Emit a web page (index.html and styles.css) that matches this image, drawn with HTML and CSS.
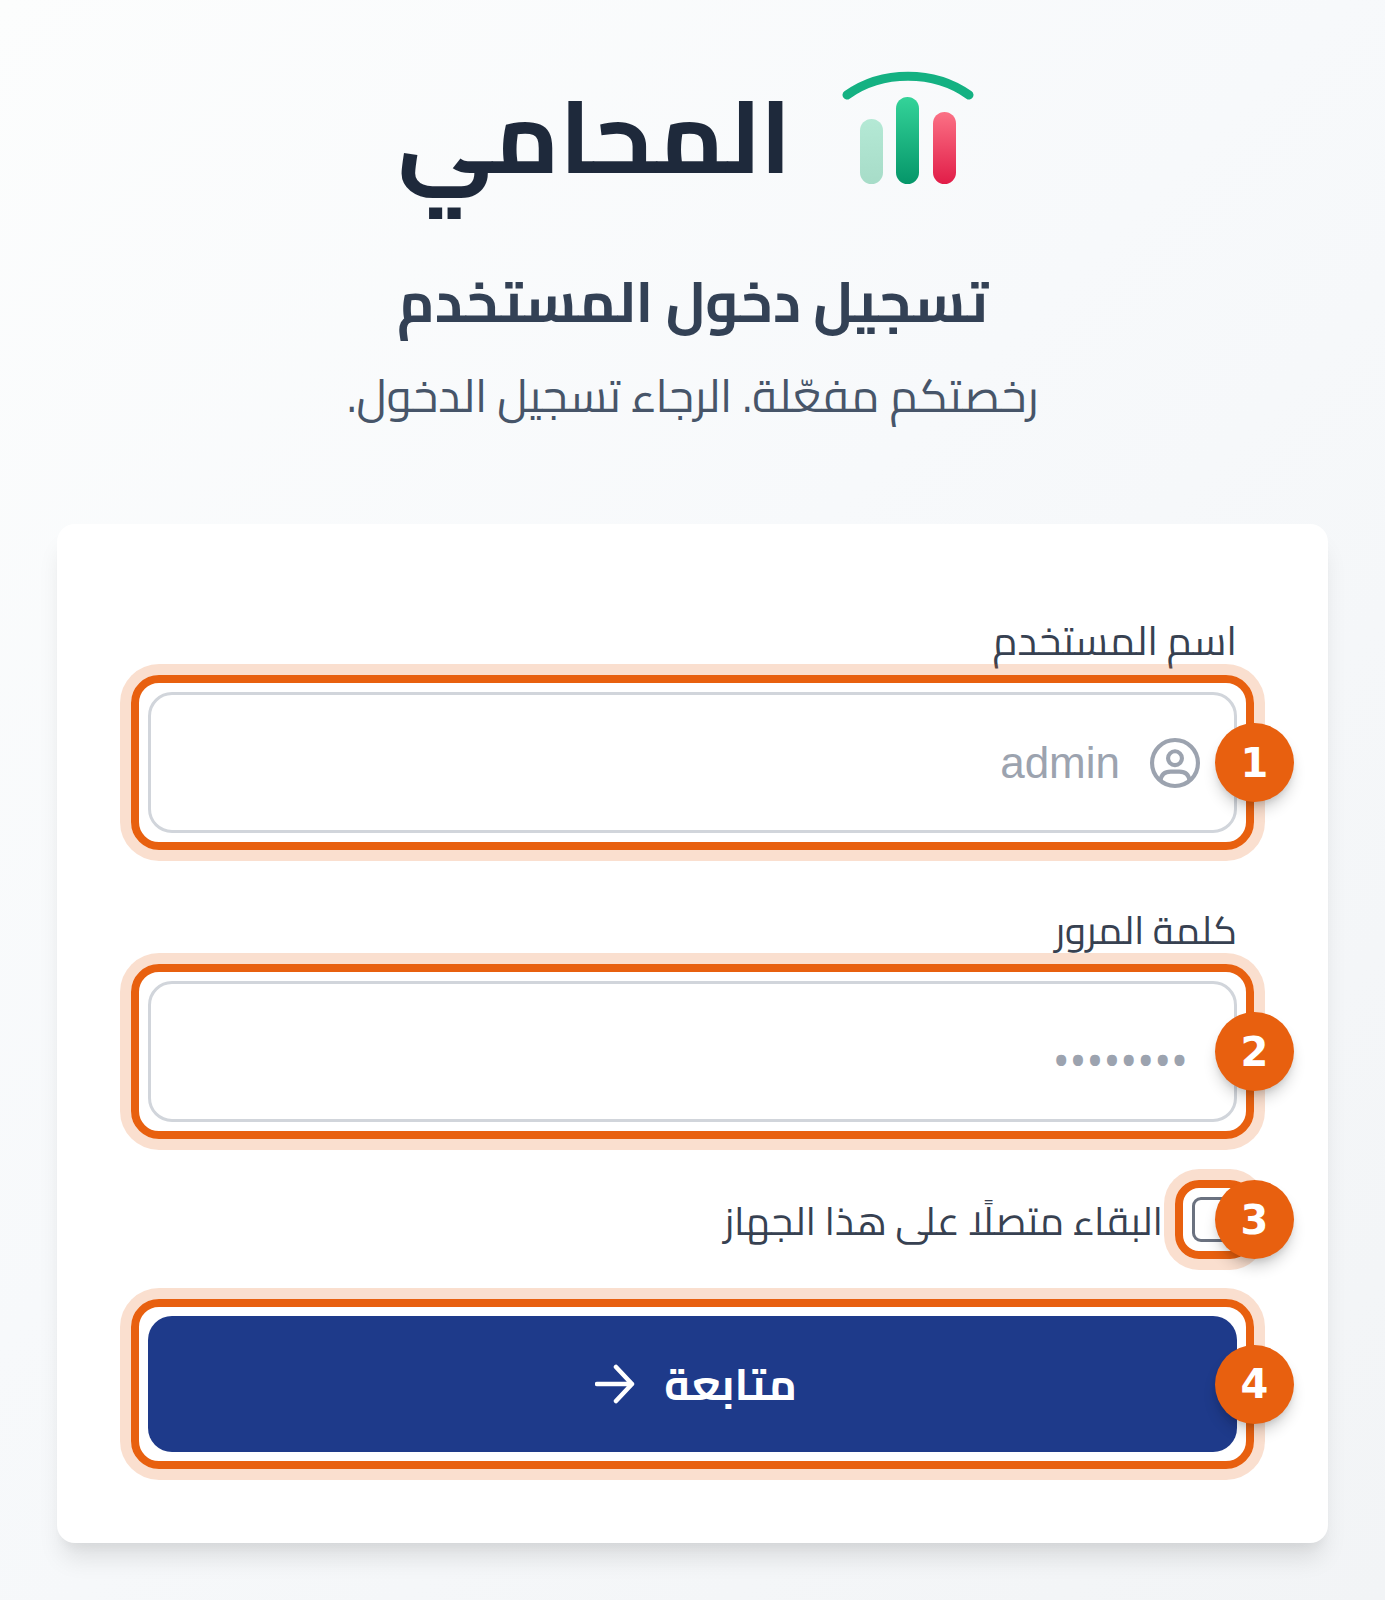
FILE: index.html
```html
<!DOCTYPE html>
<html lang="ar" dir="rtl">
<head>
<meta charset="utf-8">
<title>تسجيل الدخول</title>
<link rel="stylesheet" href="styles.css">
</head>
<body>
<main class="page">
  <header class="head">
    <div class="brand">
      <svg class="logo" viewBox="0 0 134 118" aria-hidden="true">
        <defs>
          <linearGradient id="ga" x1="0" y1="0" x2="0" y2="1"><stop offset="0" stop-color="#34d399"/><stop offset="1" stop-color="#059669"/></linearGradient>
          <linearGradient id="gb" x1="0" y1="0" x2="0" y2="1"><stop offset="0" stop-color="#fb7185"/><stop offset="1" stop-color="#e11d48"/></linearGradient>
          <linearGradient id="gc" x1="0" y1="0" x2="0" y2="1"><stop offset="0" stop-color="#b4e9d5"/><stop offset="1" stop-color="#a7dcc8"/></linearGradient>
        </defs>
        <path class="arc" d="M6 24 C41 -1 93 -1 128 24"/>
        <rect x="19" y="48" width="23" height="65" rx="11.5" fill="url(#gc)"/>
        <rect x="55" y="26" width="23" height="87" rx="11.5" fill="url(#ga)"/>
        <rect x="92" y="41" width="23" height="72" rx="11.5" fill="url(#gb)"/>
      </svg>
      <span class="brand-name">المحامي</span>
    </div>
    <h1 class="title">تسجيل دخول المستخدم</h1>
    <p class="sub">رخصتكم مفعّلة. الرجاء تسجيل الدخول.</p>
  </header>

  <form class="card">
    <label class="label" for="u">اسم المستخدم</label>
    <div class="mark">
      <div class="field">
        <svg class="user" viewBox="0 0 24 24" aria-hidden="true">
          <circle cx="12" cy="12" r="10.6"/>
          <circle cx="12" cy="9.8" r="3.2"/>
          <path d="M5.3 20.2 C5.6 17.4 7.4 16 10 16 H14 C16.6 16 18.4 17.4 18.7 20.2"/>
        </svg>
        <input class="input" id="u" type="text" placeholder="admin">
      </div>
      <span class="badge">1</span>
    </div>

    <label class="label label-next" for="p">كلمة المرور</label>
    <div class="mark">
      <div class="field">
        <input class="input" id="p" type="password" placeholder="••••••••">
      </div>
      <span class="badge">2</span>
    </div>

    <div class="remember">
      <div class="mark mark-check">
        <input class="check" id="r" type="checkbox">
        <span class="badge">3</span>
      </div>
      <label class="remember-text" for="r">البقاء متصلًا على هذا الجهاز</label>
    </div>

    <div class="mark">
      <button class="btn" type="button">
        <span>متابعة</span>
        <svg class="arrow" viewBox="0 0 40 40" aria-hidden="true"><path d="M2 20 H37 M21 3 L37 20 L21 37"/></svg>
      </button>
      <span class="badge">4</span>
    </div>
  </form>
</main>
</body>
</html>
```
FILE: styles.css
```css
* { box-sizing: border-box; }
html, body { margin: 0; }
body {
  min-height: 1600px;
  background: linear-gradient(135deg, #fcfdfd 0%, #f7f9fb 45%, #f2f4f6 100%);
  font-family: Cairo, "DejaVu Sans", sans-serif;
  color: #374151;
}
.page { padding: 0 57px; }
.head { height: 524px; padding-top: 71px; display: flex; flex-direction: column; align-items: center; }
.brand { display: flex; align-items: flex-start; gap: 49px; height: 150px; margin-right: 13px; }
.logo { width: 134px; height: 118px; }
.arc { fill: none; stroke: #14b182; stroke-width: 9; stroke-linecap: round; }
.brand-name { font-size: 101.5px; font-weight: 700; color: #1e293b; line-height: 130px; }
.title { margin: 45px 0 0; font-size: 56.6px; font-weight: 700; color: #334155; line-height: 70px; }
.sub { margin: 33px 0 0; font-size: 45.4px; color: #475569; line-height: 54px; }

.card {
  height: 1019px;
  padding: 94px 91px 91px;
  background: #fff;
  border-radius: 18px;
  box-shadow: 0 20px 25px -5px rgba(0,0,0,.1), 0 10px 10px -5px rgba(0,0,0,.04);
  display: flex;
  flex-direction: column;
}
.label { display: block; font-size: 40px; line-height: 46px; margin-bottom: 28px; color: #374151; }
.label-next { margin-top: 74px; font-size: 38.5px; }

.mark { position: relative; }
.mark::before {
  content: "";
  position: absolute;
  inset: -17px;
  border: 8px solid #e8600f;
  border-radius: 28px;
  box-shadow: 0 0 0 11px rgba(232,96,15,.2);
  pointer-events: none;
}
.badge {
  position: absolute;
  top: 50%;
  right: -57px;
  width: 79px;
  height: 79px;
  margin-top: -39.5px;
  border-radius: 50%;
  background: #e8600f;
  color: #fff;
  font-family: "DejaVu Sans", sans-serif;
  font-size: 40px;
  font-weight: 700;
  display: flex;
  align-items: center;
  justify-content: center;
  box-shadow: 0 10px 15px -3px rgba(0,0,0,.2), 0 4px 6px -2px rgba(0,0,0,.1);
}

.field { position: relative; }
.input {
  display: block;
  width: 100%;
  height: 141px;
  padding: 0 46px;
  border: 3px solid #d1d5db;
  border-radius: 24px;
  background: #fff;
  font-family: "Liberation Sans", sans-serif;
  font-size: 44px;
  outline: none;
}
#u { padding-right: 114px; }
#p { padding-top: 20px; font-family: "Noto Kufi Arabic", sans-serif; font-size: 45px; }
.input::placeholder { color: #9ca3af; opacity: 1; }
.user {
  position: absolute;
  top: 45px;
  right: 36px;
  width: 52px;
  height: 52px;
  fill: none;
  stroke: #9ca3af;
  stroke-width: 1.9;
}

.remember { display: flex; align-items: center; gap: 29px; margin-top: 73.5px; margin-bottom: 72.5px; }
.mark-check { width: 45px; height: 45px; flex: none; }
.mark-check::before { border-radius: 24px; }
.check {
  appearance: none;
  display: block;
  width: 45px;
  height: 45px;
  margin: 0;
  border: 3px solid #6b7280;
  border-radius: 9px;
  background: #fff;
}
.remember-text { padding-top: 2px; font-size: 39px; line-height: 46px; color: #374151; }

.btn {
  display: flex;
  align-items: center;
  justify-content: center;
  gap: 29px;
  width: 100%;
  height: 136px;
  padding: 0 0 0 7px;
  border: 0;
  border-radius: 24px;
  background: #1e3a8a;
  color: #fff;
  font-family: Cairo, sans-serif;
  font-size: 44px;
  font-weight: 700;
}
.arrow { width: 40px; height: 40px; fill: none; stroke: #fff; stroke-width: 4.5; stroke-linecap: round; stroke-linejoin: round; }
```
